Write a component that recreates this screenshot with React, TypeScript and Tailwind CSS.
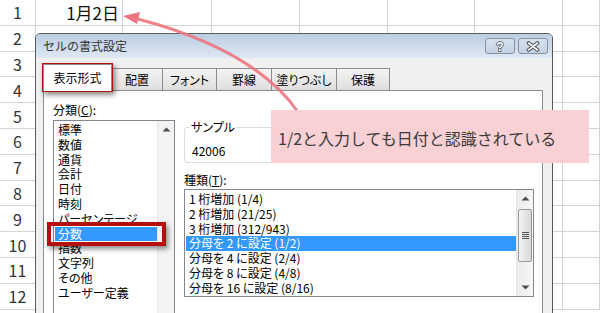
const sheetCols = ['w-[36px]', 'w-[87px]', 'w-[89px]', 'w-[88px]', 'w-[88px]', 'w-[87px]', 'w-[88px]', 'flex-1']

const categories = ['標準', '数値', '通貨', '会計', '日付', '時刻', 'パーセンテージ', '分数', '指数', '文字列', 'その他', 'ユーザー定義']

const fractionTypes = [
  '1 桁増加 (1/4)',
  '2 桁増加 (21/25)',
  '3 桁増加 (312/943)',
  '分母を 2 に設定 (1/2)',
  '分母を 4 に設定 (2/4)',
  '分母を 8 に設定 (4/8)',
  '分母を 16 に設定 (8/16)',
]

const tabs = [
  { label: '配置', w: 'w-[51px]' },
  { label: 'フォント', w: 'w-[54px]' },
  { label: '罫線', w: 'w-[55px]' },
  { label: '塗りつぶし', w: 'w-[65px]' },
  { label: '保護', w: 'w-[53px]' },
]

function Arrow({ down = false }: { down?: boolean }) {
  return (
    <svg width="9" height="5" viewBox="0 0 9 5">
      <path d={down ? 'M0.5 0.5h8L4.5 4.5z' : 'M4.5 0.5l4 4h-8z'} fill="#4a4a4a" />
    </svg>
  )
}

function Sheet() {
  return (
    <div className="flex flex-col">
      {Array.from({ length: 12 }, (_, i) => (
        <div key={i} className="flex h-[25.8px] border-b border-[#d4d4d4]">
          {sheetCols.map((w, c) => (
            <div
              key={c}
              className={`${w} h-full border-r border-[#d4d4d4] flex items-center ${c === 0 ? 'justify-center' : 'justify-end pr-[3px]'}`}
            >
              {c === 0 && <span className="text-[16px] leading-none text-[#333]">{i + 1}</span>}
              {c === 1 && i === 0 && <span className="text-[17px] leading-none text-[#111]">1月2日</span>}
            </div>
          ))}
        </div>
      ))}
    </div>
  )
}

function Dialog() {
  return (
    <div className="absolute left-[35px] top-[33px] w-[518px] h-[300px] border border-[#5b5b5b] rounded-t-[5px] bg-[#f0f0f0] flex flex-col overflow-hidden">
      {/* title bar */}
      <div className="h-[24px] bg-linear-to-b from-[#bccee3] to-[#dee8f2] flex items-center justify-between pl-[7px] pr-[4px]">
        <span className="text-[12px] leading-none text-[#333]">セルの書式設定</span>
        <div className="flex gap-[3px]">
          <div className="w-[30px] h-[16px] rounded-[3px] border border-[#8593a6] bg-linear-to-b from-[#d6e1ed] to-[#c4d3e4] flex items-center justify-center">
            <svg width="12" height="14" viewBox="0 0 12 14">
              <text x="6" y="12" textAnchor="middle" fontSize="13" fontWeight="bold" fontFamily="Liberation Sans, sans-serif" fill="#fff" stroke="#454a54" strokeWidth="1.3" paintOrder="stroke">?</text>
            </svg>
          </div>
          <div className="w-[30px] h-[16px] rounded-[3px] border border-[#8593a6] bg-linear-to-b from-[#d6e1ed] to-[#c4d3e4] flex items-center justify-center">
            <svg width="14" height="11" viewBox="0 0 14 11">
              <path d="M2.5 2L11.5 9M11.5 2L2.5 9" stroke="#454a54" strokeWidth="3.6" strokeLinecap="round" />
              <path d="M2.5 2L11.5 9M11.5 2L2.5 9" stroke="#fff" strokeWidth="1.6" strokeLinecap="round" />
            </svg>
          </div>
        </div>
      </div>

      {/* tabs */}
      <div className="flex items-end pl-[7px] pt-[6px] [font-feature-settings:'palt']">
        <div className="w-[69px] h-[27px] border border-b-0 border-[#898c95] bg-white relative z-10 -mb-px flex items-center justify-center text-[12px] leading-none text-black">
          表示形式
        </div>
        {tabs.map((t) => (
          <div
            key={t.label}
            className={`${t.w} h-[22px] border border-l-0 border-b-0 border-[#898c95] bg-linear-to-b from-[#f4f4f4] to-[#dedede] flex items-center justify-center text-[12px] leading-none text-black`}
          >
            {t.label}
          </div>
        ))}
      </div>

      {/* panel */}
      <div className="flex-1 ml-[7px] mr-[9px] border border-[#898c95] bg-white flex gap-[9px] pl-[9px] [font-feature-settings:'palt'] text-[12px] text-black">
        <div className="w-[122px] flex flex-col pt-[10px]">
          <div className="h-[17px] leading-[17px]">
            分類(<span className="underline">C</span>):
          </div>
          <div className="mt-[2px] flex-1 border border-[#828790] flex">
            <div className="flex-1 pl-[1px] pt-[2px] flex flex-col">
              {categories.map((c) => (
                <div
                  key={c}
                  className={`h-[14.8px] leading-[14.8px] pl-[3px] whitespace-nowrap ${c === '分数' ? 'bg-[#3399ff] text-white' : ''}`}
                >
                  {c}
                </div>
              ))}
            </div>
            <div className="w-[17px] bg-[#f3f3f3] border-l border-[#e8e8e8] flex flex-col">
              <div className="h-[17px] flex items-center justify-center">
                <Arrow />
              </div>
            </div>
          </div>
        </div>

        <div className="w-[350px] flex flex-col pt-[29px]">
          <fieldset className="border border-[#d5dfe5] rounded-[3px] pl-[5px] pb-[3px]">
            <legend className="px-[1px] leading-[14px]">サンプル</legend>
            <div className="mt-[9px] pl-[2px] leading-[16px]">42006</div>
          </fieldset>
          <div className="mt-[8px] h-[17px] leading-[17px]">
            種類(<span className="underline">T</span>):
          </div>
          <div className="mt-[1px] h-[108px] border border-[#828790] flex">
            <div className="flex-1 pl-[1px] pt-[2px] flex flex-col">
              {fractionTypes.map((t, i) => (
                <div
                  key={t}
                  className={`h-[14.8px] leading-[14.8px] pl-[3px] whitespace-nowrap ${i === 3 ? 'bg-[#3399ff] text-white' : ''}`}
                >
                  {t}
                </div>
              ))}
            </div>
            <div className="w-[17px] bg-linear-to-r from-[#ececec] to-[#f6f6f6] border-l border-[#e6e6e6] flex flex-col">
              <div className="h-[17px] flex items-center justify-center">
                <Arrow />
              </div>
              <div className="mt-[2px] h-[53px] mx-[1px] rounded-[2px] border border-[#9a9a9a] bg-linear-to-r from-[#f4f4f4] to-[#d8d8d8] flex flex-col items-center justify-center gap-[1px]">
                <div className="w-[7px] h-px bg-[#555]" />
                <div className="w-[7px] h-px bg-[#555]" />
                <div className="w-[7px] h-px bg-[#555]" />
                <div className="w-[7px] h-px bg-[#555]" />
              </div>
              <div className="flex-1" />
              <div className="h-[17px] flex items-center justify-center">
                <Arrow down />
              </div>
            </div>
          </div>
        </div>
      </div>
    </div>
  )
}

export default function App() {
  return (
    <div className="relative w-[600px] h-[313px] overflow-hidden bg-white font-['Noto_Sans_CJK_JP','Noto_Sans',sans-serif]">
      <Sheet />
      <Dialog />

      {/* highlight boxes */}
      <div className="absolute left-[42px] top-[63px] w-[71px] h-[29px] border-4 border-[#b40f0f] shadow-[2px_3px_5px_rgba(0,0,0,0.45)]" />
      <div className="absolute left-[47px] top-[222px] w-[119px] h-[24px] border-4 border-[#b40f0f] shadow-[2px_3px_5px_rgba(0,0,0,0.45)]" />

      {/* arrow */}
      <svg className="absolute left-0 top-0 pointer-events-none" width="600" height="313" viewBox="0 0 600 313">
        <path d="M298 112 Q255 50 138 19" stroke="#ec7580" strokeOpacity="0.9" strokeWidth="3" fill="none" />
        <polygon points="123,16 140,12 137,24" fill="#ec7580" />
      </svg>

      {/* callout */}
      <div className="absolute left-[271px] top-[110px] w-[318px] h-[53px] bg-[#f9d0d3] flex items-center pl-[7px] pt-[2px] text-[16px] text-[#3a3a3a]">
        1/2と入力しても日付と認識されている
      </div>
    </div>
  )
}
